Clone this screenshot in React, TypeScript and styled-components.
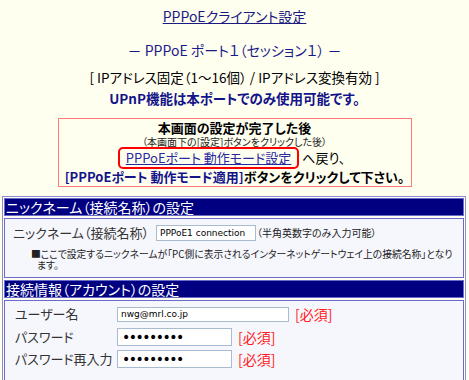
import React from "react";
import styled, { createGlobalStyle } from "styled-components";

const Global = createGlobalStyle`
  html, body { margin: 0; padding: 0; background: #fffff0; }
  body {
    font-family: "Noto Sans CJK JP", "Liberation Sans", sans-serif;
    font-feature-settings: "palt";
    color: #000;
  }
`;

const Page = styled.div`
  width: 469px;
  height: 380px;
  overflow: hidden;
  padding-top: 7px;
  box-sizing: border-box;
`;

const Title = styled.a`
  display: block;
  text-align: center;
  font-size: 14px;
  line-height: 18px;
  color: #1a1a80;
  text-decoration: underline;
`;

const SubTitle = styled.div`
  margin-top: 16px;
  text-align: center;
  font-size: 14px;
  line-height: 18px;
  color: #1a1a8a;
`;

const InfoBlock = styled.div`
  margin-top: 8px;
  text-align: center;
  font-size: 13.5px;
  line-height: 21px;
`;

const InfoLine = styled.div<{ $accent?: boolean }>`
  color: ${(p) => (p.$accent ? "#14148a" : "#000")};
  font-weight: ${(p) => (p.$accent ? 700 : 400)};
  white-space: nowrap;
`;

const Notice = styled.div`
  margin: 9px auto 0;
  width: 354px;
  box-sizing: border-box;
  border: 1px solid #ff7a7a;
  padding: 1px 0 2px;
  text-align: center;
`;

const NoticeHead = styled.div`
  font-size: 13px;
  line-height: 16px;
  font-weight: 700;
`;

const NoticeSmall = styled.div`
  font-size: 10px;
  line-height: 11px;
  color: #222;
`;

const LinkRow = styled.div`
  display: flex;
  justify-content: center;
  align-items: center;
  gap: 3px;
  font-size: 13px;
  line-height: 16px;
  margin-left: -6px;
`;

const LinkFrame = styled.span`
  display: inline-block;
  border: 2px solid #ff0000;
  border-radius: 5px;
  padding: 1px 6px;
`;

const ModeLink = styled.a`
  color: #2a2aa0;
  text-decoration: underline;
`;

const NoticeLast = styled.div`
  font-size: 13px;
  line-height: 15px;
  font-weight: 700;
  white-space: nowrap;
`;

const Strong = styled.span`
  color: #14148a;
`;

const Table = styled.div`
  margin: 9px 0 0 2px;
  width: 464px;
  box-sizing: border-box;
  border: 1px solid #8a8ad6;
  padding: 1px;
  display: flex;
  flex-direction: column;
  gap: 2px;
`;

const HeaderCell = styled.div`
  height: 18px;
  box-sizing: border-box;
  border: 1px solid #6a6ac8;
  background: #000080;
  color: #fff;
  font-size: 14px;
  line-height: 16px;
  padding-left: 1px;
  white-space: nowrap;
`;

const BodyCell = styled.div<{ $pad: string }>`
  border: 1px solid #6a6ac8;
  background: #f6f7fd;
  padding: ${(p) => p.$pad};
`;

const NickRow = styled.div`
  display: flex;
  align-items: center;
  height: 16px;
  padding-left: 8px;
  gap: 7px;
`;

const Label = styled.span`
  font-size: 13px;
  line-height: 16px;
  color: #333;
  white-space: nowrap;
`;

const TextBox = styled.input<{ $w: number; $h: number; $fs: number }>`
  width: ${(p) => p.$w}px;
  height: ${(p) => p.$h}px;
  box-sizing: border-box;
  border: 1px solid #a9bccf;
  background: #fff;
  padding: 0 3px;
  font-family: "DejaVu Sans", "Liberation Sans", sans-serif;
  font-size: ${(p) => p.$fs}px;
  color: #000;
  outline: none;
`;

const SecretBox = styled(TextBox)`
  letter-spacing: -1.5px;
  padding-left: 4px;
`;

const Hint = styled.span`
  font-size: 10px;
  line-height: 14px;
  color: #222;
  white-space: nowrap;
  margin-left: -6px;
`;

const Note = styled.div`
  margin-top: 8px;
  padding-left: 26px;
  padding-right: 4px;
  font-size: 9.8px;
  line-height: 10.5px;
  color: #222;
`;

const NoteFirst = styled.span`
  display: block;
  white-space: nowrap;
`;

const NoteCont = styled.span`
  display: block;
  padding-left: 6px;
`;

const Grid = styled.div`
  display: grid;
  grid-template-columns: 102px auto;
  grid-auto-rows: 22.5px;
  align-items: center;
  padding-left: 10px;
`;

const FieldCell = styled.div`
  display: flex;
  align-items: center;
  gap: 6px;
`;

const Required = styled.span`
  color: #ff2020;
  font-size: 14px;
  line-height: 16px;
  white-space: nowrap;
`;

const Divider = styled.div`
  margin: 9px 14px 0 16px;
  border-top: 2px solid #333;
  height: 10px;
`;

export default function App() {
  return (
    <Page>
      <Global />
      <Title href="#">PPPoEクライアント設定</Title>
      <SubTitle>－ PPPoE ポート１（セッション１） －</SubTitle>
      <InfoBlock>
        <InfoLine>[ IPアドレス固定（1～16個） / IPアドレス変換有効 ]</InfoLine>
        <InfoLine $accent>UPnP機能は本ポートでのみ使用可能です。</InfoLine>
      </InfoBlock>
      <Notice>
        <NoticeHead>本画面の設定が完了した後</NoticeHead>
        <NoticeSmall>（本画面下の[設定]ボタンをクリックした後）</NoticeSmall>
        <LinkRow>
          <LinkFrame>
            <ModeLink href="#">PPPoEポート 動作モード設定</ModeLink>
          </LinkFrame>
          <span>へ戻り、</span>
        </LinkRow>
        <NoticeLast>
          <Strong>[PPPoEポート 動作モード適用]</Strong>ボタンをクリックして下さい。
        </NoticeLast>
      </Notice>
      <Table>
        <HeaderCell>ニックネーム（接続名称）の設定</HeaderCell>
        <BodyCell $pad="6px 0 7px">
          <NickRow>
            <Label>ニックネーム（接続名称）</Label>
            <TextBox $w={100} $h={16} $fs={9} defaultValue="PPPoE1 connection" />
            <Hint>（半角英数字のみ入力可能）</Hint>
          </NickRow>
          <Note>
            <NoteFirst>
              ■ここで設定するニックネームが「PC側に表示されるインターネットゲートウェイ上の接続名称」となり
            </NoteFirst>
            <NoteCont>ます。</NoteCont>
          </Note>
        </BodyCell>
        <HeaderCell>接続情報（アカウント）の設定</HeaderCell>
        <BodyCell $pad="2px 0 0">
          <Grid>
            <Label>ユーザー名</Label>
            <FieldCell>
              <TextBox $w={172} $h={15} $fs={9} defaultValue="nwg@mrl.co.jp" />
              <Required>[必須]</Required>
            </FieldCell>
            <Label>パスワード</Label>
            <FieldCell>
              <SecretBox type="password" $w={115} $h={18} $fs={14} defaultValue="123456789" />
              <Required>[必須]</Required>
            </FieldCell>
            <Label>パスワード再入力</Label>
            <FieldCell>
              <SecretBox type="password" $w={115} $h={18} $fs={14} defaultValue="123456789" />
              <Required>[必須]</Required>
            </FieldCell>
          </Grid>
          <Divider />
        </BodyCell>
      </Table>
    </Page>
  );
}
